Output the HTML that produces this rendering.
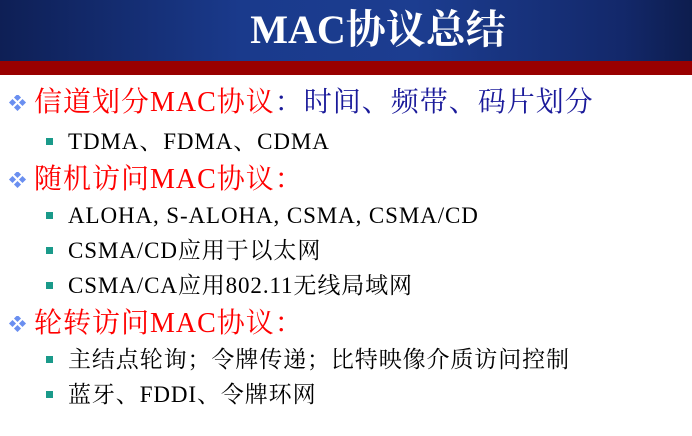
<!DOCTYPE html>
<html><head><meta charset="utf-8"><style>
body{margin:0;width:692px;height:436px;background:#fff;overflow:hidden;position:relative;font-family:"Liberation Serif","Noto Serif CJK SC",serif}
.hd{position:absolute;left:0;top:0;width:692px;height:61px;background:linear-gradient(90deg,#0e1f55 0%,#1a3a8c 35%,#1c3d90 60%,#13286a 90%,#0d1d4e 100%)}
.rb{position:absolute;left:0;top:61px;width:692px;height:14px;background:#990000}
.t{position:absolute;left:0;width:692px;top:6px;text-align:center;color:#fff;font-size:40px;font-weight:bold;line-height:48px;padding-left:64px;box-sizing:border-box}
.l1{position:absolute;left:34px;font-size:28px;line-height:34px;color:#f00;white-space:nowrap;letter-spacing:1px}
.l1 .b{color:#1a1a9a}
.dm{position:absolute;left:-26px;top:9px;width:20px;height:16px}
.l2{position:absolute;left:68px;font-size:23px;line-height:28px;color:#000;white-space:nowrap;letter-spacing:0.9px}
.l2:before{content:"";position:absolute;left:-22px;top:10px;width:7px;height:7px;background:#1a9a8a}
</style></head><body>
<div class="hd"></div><div class="rb"></div>
<div class="t">MAC协议总结</div>
<svg width="0" height="0" style="position:absolute"><defs><g id="d"><rect x="7" y="0" width="5" height="5" transform="rotate(45 9.5 2.5)" fill="#6a8ff0"/><rect x="2" y="5" width="5" height="5" transform="rotate(45 4.5 7.5)" fill="#6a8ff0"/><rect x="12" y="5" width="5" height="5" transform="rotate(45 14.5 7.5)" fill="#6a8ff0"/><rect x="7" y="10" width="5" height="5" transform="rotate(45 9.5 12.5)" fill="#6a8ff0"/></g></defs></svg>
<div class="l1" style="top:86px"><svg class="dm"><use href="#d"/></svg>信道划分MAC协议<span class="b">：时间、频带、码片划分</span></div>
<div class="l2" style="top:128px">TDMA、FDMA、CDMA</div>
<div class="l1" style="top:163px"><svg class="dm"><use href="#d"/></svg>随机访问MAC协议：</div>
<div class="l2" style="top:202px">ALOHA, S-ALOHA, CSMA, CSMA/CD</div>
<div class="l2" style="top:237px">CSMA/CD应用于以太网</div>
<div class="l2" style="top:272px">CSMA/CA应用802.11无线局域网</div>
<div class="l1" style="top:307px"><svg class="dm"><use href="#d"/></svg>轮转访问MAC协议：</div>
<div class="l2" style="top:346px">主结点轮询；令牌传递；比特映像介质访问控制</div>
<div class="l2" style="top:381px">蓝牙、FDDI、令牌环网</div>
</body></html>
